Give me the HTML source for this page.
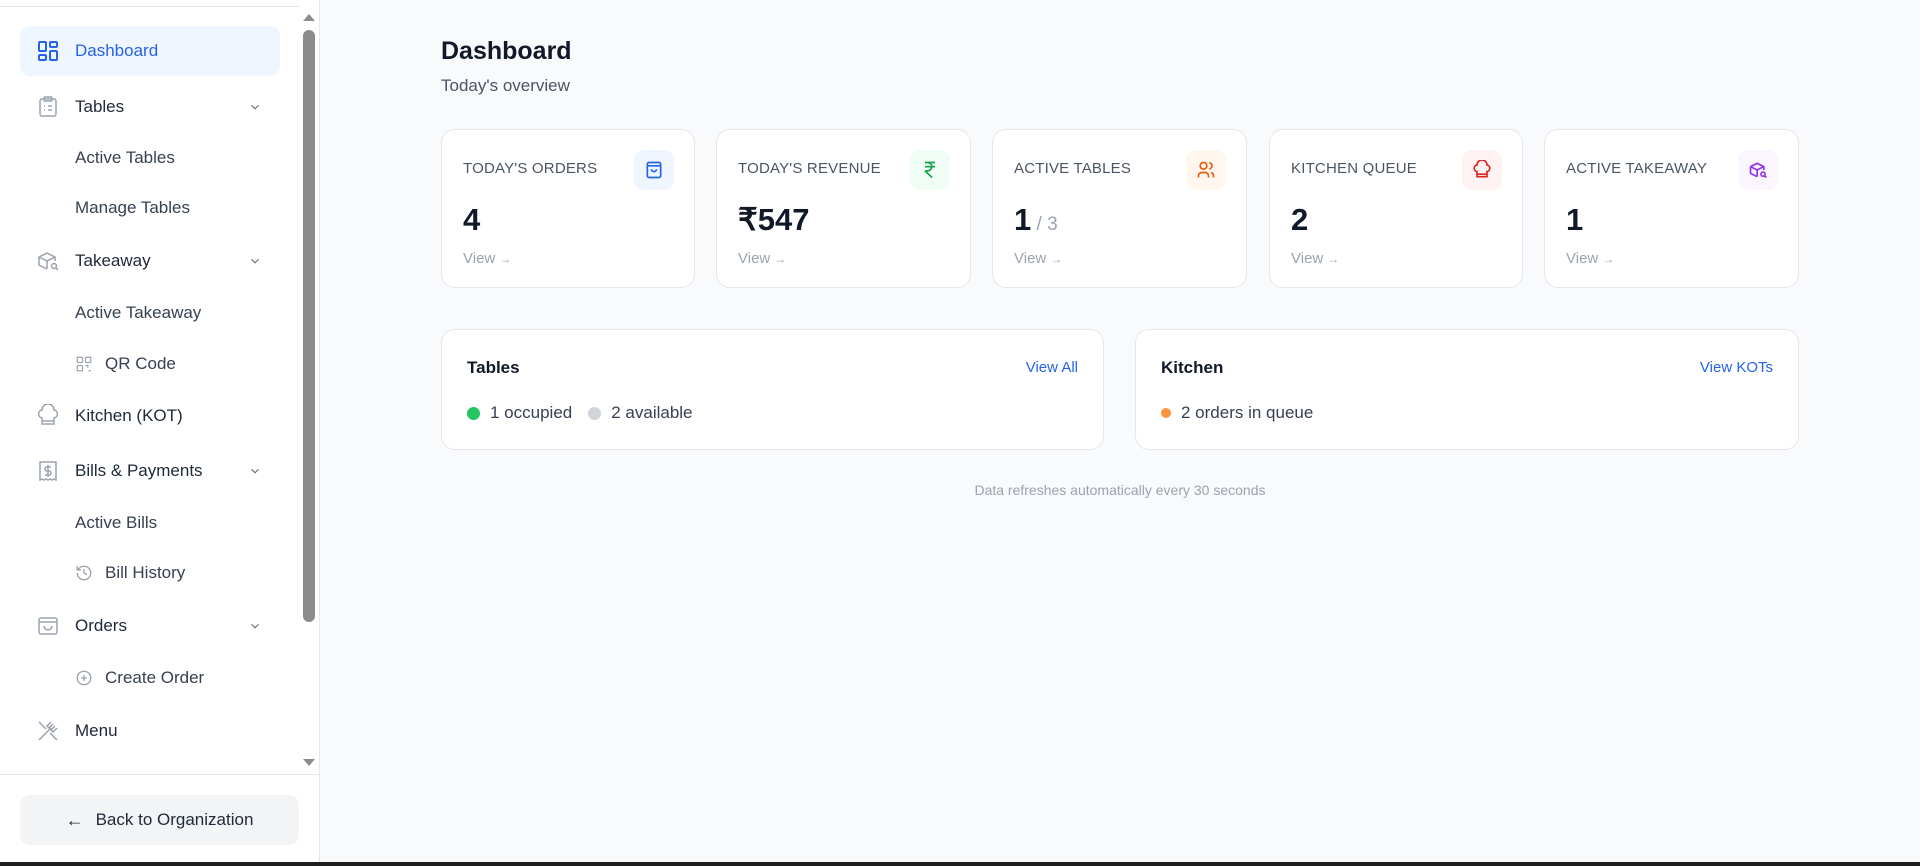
<!DOCTYPE html>
<html><head><meta charset="utf-8"><style>
*{box-sizing:border-box;margin:0;padding:0}
body{width:1920px;height:866px;overflow:hidden;background:#f9fafb;font-family:"Liberation Sans",sans-serif;position:relative;color:#111827}
.sb{position:absolute;left:0;top:0;width:320px;height:862px;background:#fff;border-right:1px solid #e5e7eb}
.sb .topline{position:absolute;left:0;top:6px;width:300px;height:1px;background:#e5e7eb}
.item{position:absolute;left:20px;width:260px;height:50px;display:flex;align-items:center;font-size:17px;color:#1f2937;font-weight:400}
.item .ic{position:absolute;left:16px;top:50%;transform:translateY(-50%);width:24px;height:24px}
.item .t{position:absolute;left:55px}
.item .ch{position:absolute;left:228px;top:50%;transform:translateY(-50%)}
.sub{position:absolute;left:75px;font-size:17px;color:#374151;transform:translateY(-50%)}
.sub2{position:absolute;left:75px;font-size:17px;color:#374151;transform:translateY(-50%);display:flex;align-items:center}
.sub2 svg{margin-right:12px}
.act{background:#eff6ff;border-radius:10px;color:#2563eb}
.scroll{position:absolute;left:303px;top:30px;width:12px;height:592px;background:#8c8c8c;border-radius:6px}
.card{position:absolute;background:#fff;border:1px solid #e5e7eb;border-radius:14px}
.lbl{position:absolute;left:21px;top:30px;font-size:15px;color:#4b5563;letter-spacing:.2px}
.icb{position:absolute;right:20px;top:20px;width:40px;height:40px;border-radius:10px;display:flex;align-items:center;justify-content:center}
.num{position:absolute;left:21px;top:72px;font-size:31px;font-weight:700;color:#111827}
.num small{font-size:19px;color:#9ca3af;font-weight:400}
.view{position:absolute;left:21px;top:120px;font-size:15px;color:#9ca3af}
.view span{font-size:12px;margin-left:4px}
</style></head><body>
<div class="sb">
<div class="topline"></div>
<div class="item act" style="top:26px;color:#2563eb"><svg class="ic" viewBox="0 0 24 24" fill="none" stroke="#2563eb" stroke-width="2"><rect x="3" y="3" width="7" height="9" rx="1"/><rect x="14" y="3" width="7" height="5" rx="1"/><rect x="14" y="12" width="7" height="9" rx="1"/><rect x="3" y="16" width="7" height="5" rx="1"/></svg><span class="t">Dashboard</span></div>
<div class="item" style="top:82px"><svg class="ic" viewBox="0 0 24 24" fill="none" stroke="#9ca3af" stroke-width="1.5"><rect x="4" y="4" width="16" height="17" rx="2"/><rect x="8" y="2" width="8" height="4" rx="1"/><path d="M8 11h1M12 11h4M8 15h1M12 15h4"/></svg><span class="t">Tables</span><svg class="ch" width="14" height="14" viewBox="0 0 24 24" fill="none" stroke="#6b7280" stroke-width="2"><path d="M6 9l6 6 6-6"/></svg></div>
<div class="sub" style="top:158px">Active Tables</div>
<div class="sub" style="top:208px">Manage Tables</div>
<div class="item" style="top:236px"><svg class="ic" viewBox="0 0 24 24" fill="none" stroke="#9ca3af" stroke-width="1.5"><path d="M3 8l8-4 8 4v4M3 8v8l8 4M3 8l8 4 8-4M11 12v8"/><circle cx="18" cy="17" r="2.5"/><path d="M20 19l2 2"/></svg><span class="t">Takeaway</span><svg class="ch" width="14" height="14" viewBox="0 0 24 24" fill="none" stroke="#6b7280" stroke-width="2"><path d="M6 9l6 6 6-6"/></svg></div>
<div class="sub" style="top:313px">Active Takeaway</div>
<div class="sub2" style="top:364px"><svg width="18" height="18" viewBox="0 0 24 24" fill="none" stroke="#9ca3af" stroke-width="1.6"><rect x="3" y="3" width="7" height="7" rx="1"/><rect x="14" y="3" width="7" height="7" rx="1"/><rect x="3" y="14" width="7" height="7" rx="1"/><path d="M14 14h3v3M21 14v.01M14 21h.01M18 21h3M21 18v.01"/></svg>QR Code</div>
<div class="item" style="top:391px"><svg class="ic" viewBox="0 0 24 24" fill="none" stroke="#9ca3af" stroke-width="1.5"><path d="M6 13.9A4 4 0 0 1 6 6a5 5 0 0 1 12 0 4 4 0 0 1 0 7.9V20H6z"/><path d="M6 17h12"/></svg><span class="t">Kitchen (KOT)</span></div>
<div class="item" style="top:446px"><svg class="ic" viewBox="0 0 24 24" fill="none" stroke="#9ca3af" stroke-width="1.5"><path d="M4 3h16v18l-2-1-2 1-2-1-2 1-2-1-2 1-2-1-2 1z"/><path d="M15 8h-4a2 2 0 0 0 0 4h2a2 2 0 0 1 0 4H9M12 6v12"/></svg><span class="t">Bills &amp; Payments</span><svg class="ch" width="14" height="14" viewBox="0 0 24 24" fill="none" stroke="#6b7280" stroke-width="2"><path d="M6 9l6 6 6-6"/></svg></div>
<div class="sub" style="top:523px">Active Bills</div>
<div class="sub2" style="top:573px"><svg width="18" height="18" viewBox="0 0 24 24" fill="none" stroke="#9ca3af" stroke-width="1.8"><path d="M3 12a9 9 0 1 0 3-6.7L3 8M3 3v5h5M12 7v5l4 2"/></svg>Bill History</div>
<div class="item" style="top:601px"><svg class="ic" viewBox="0 0 24 24" fill="none" stroke="#9ca3af" stroke-width="1.5"><rect x="3" y="4" width="18" height="16" rx="2"/><path d="M3 8h18M8 12a4 4 0 0 0 8 0"/></svg><span class="t">Orders</span><svg class="ch" width="14" height="14" viewBox="0 0 24 24" fill="none" stroke="#6b7280" stroke-width="2"><path d="M6 9l6 6 6-6"/></svg></div>
<div class="sub2" style="top:678px"><svg width="18" height="18" viewBox="0 0 24 24" fill="none" stroke="#9ca3af" stroke-width="1.8"><circle cx="12" cy="12" r="9"/><path d="M12 8v8M8 12h8"/></svg>Create Order</div>
<div class="item" style="top:706px"><svg class="ic" viewBox="0 0 24 24" fill="none" stroke="#9ca3af" stroke-width="1.5"><path d="M3 21l12-12M15 3l-4 4 6 6 4-4M17 5l-4 4M19 7l-4 4M3 3l7 7M14 14l7 7"/></svg><span class="t">Menu</span></div>
<svg style="position:absolute;left:303px;top:12px" width="12" height="10"><path d="M0 9L6 2L12 9z" fill="#8c8c8c"/></svg>
<div class="scroll"></div>
<svg style="position:absolute;left:303px;top:758px" width="12" height="10"><path d="M0 1L6 8L12 1z" fill="#8c8c8c"/></svg>
<div style="position:absolute;left:0;top:774px;width:320px;height:1px;background:#e5e7eb"></div>
<div style="position:absolute;left:20px;top:795px;width:279px;height:50px;background:#f3f4f6;border-radius:10px;display:flex;align-items:center;justify-content:center;font-size:17px;color:#1f2937"><span style="font-size:18px;margin-right:12px">←</span>Back to Organization</div>
</div>
<div style="position:absolute;left:0;top:862px;width:1920px;height:4px;background:#1f1f1f"></div>

<div style="position:absolute;left:441px;top:37px;font-size:25px;font-weight:700;color:#111827">Dashboard</div>
<div style="position:absolute;left:441px;top:76px;font-size:17px;color:#4b5563">Today's overview</div>

<div class="card" style="left:441px;top:129px;width:254px;height:159px"><div class="lbl">TODAY'S ORDERS</div><div class="icb" style="background:#eff6ff"><svg width="20" height="20" viewBox="0 0 24 24" fill="none" stroke="#2563eb" stroke-width="2"><rect x="4" y="3" width="16" height="18" rx="2"/><path d="M4 7h16M9 11a3 3 0 0 0 6 0"/></svg></div><div class="num">4</div><div class="view">View<span>→</span></div></div>
<div class="card" style="left:716px;top:129px;width:255px;height:159px"><div class="lbl">TODAY'S REVENUE</div><div class="icb" style="background:#f0fdf4"><svg width="20" height="20" viewBox="0 0 24 24" fill="none" stroke="#16a34a" stroke-width="2"><path d="M6 3h12M6 8h12M6 13l8.5 8M6 13h3c6.7 0 6.7-10 0-10"/></svg></div><div class="num">₹547</div><div class="view">View<span>→</span></div></div>
<div class="card" style="left:992px;top:129px;width:255px;height:159px"><div class="lbl">ACTIVE TABLES</div><div class="icb" style="background:#fff7ed"><svg width="20" height="20" viewBox="0 0 24 24" fill="none" stroke="#ea580c" stroke-width="2"><circle cx="9" cy="7" r="4"/><path d="M3 21v-2a4 4 0 0 1 4-4h4a4 4 0 0 1 4 4v2M16 3.1a4 4 0 0 1 0 7.8M21 21v-2a4 4 0 0 0-3-3.9"/></svg></div><div class="num">1<small> / 3</small></div><div class="view">View<span>→</span></div></div>
<div class="card" style="left:1269px;top:129px;width:254px;height:159px"><div class="lbl">KITCHEN QUEUE</div><div class="icb" style="background:#fef2f2"><svg width="20" height="20" viewBox="0 0 24 24" fill="none" stroke="#dc2626" stroke-width="2"><path d="M6 13.9A4 4 0 0 1 6 6a5 5 0 0 1 12 0 4 4 0 0 1 0 7.9V20H6z"/><path d="M6 17h12"/></svg></div><div class="num">2</div><div class="view">View<span>→</span></div></div>
<div class="card" style="left:1544px;top:129px;width:255px;height:159px"><div class="lbl">ACTIVE TAKEAWAY</div><div class="icb" style="background:#faf5ff"><svg width="20" height="20" viewBox="0 0 24 24" fill="none" stroke="#9333ea" stroke-width="2"><path d="M3 8l8-4 8 4v4M3 8v8l8 4M3 8l8 4 8-4M11 12v8"/><circle cx="18" cy="17" r="2.5"/><path d="M20 19l2 2"/></svg></div><div class="num">1</div><div class="view">View<span>→</span></div></div>

<div class="card" style="left:441px;top:329px;width:663px;height:121px">
<div style="position:absolute;left:25px;top:28px;font-size:17px;font-weight:700">Tables</div>
<div style="position:absolute;right:25px;top:29px;font-size:15px;color:#2563eb">View All</div>
<div style="position:absolute;left:25px;top:73px;font-size:17px;color:#374151;display:flex;align-items:center"><span style="width:13px;height:13px;border-radius:50%;background:#22c55e;margin-right:10px"></span>1 occupied<span style="width:13px;height:13px;border-radius:50%;background:#d1d5db;margin:0 10px 0 16px"></span>2 available</div>
</div>
<div class="card" style="left:1135px;top:329px;width:664px;height:121px">
<div style="position:absolute;left:25px;top:28px;font-size:17px;font-weight:700">Kitchen</div>
<div style="position:absolute;right:25px;top:29px;font-size:15px;color:#2563eb">View KOTs</div>
<div style="position:absolute;left:25px;top:73px;font-size:17px;color:#374151;display:flex;align-items:center"><span style="width:10px;height:10px;border-radius:50%;background:#fb923c;margin-right:10px"></span>2 orders in queue</div>
</div>
<div style="position:absolute;left:441px;width:1358px;top:482px;text-align:center;font-size:14px;color:#9ca3af">Data refreshes automatically every 30 seconds</div>
</body></html>
